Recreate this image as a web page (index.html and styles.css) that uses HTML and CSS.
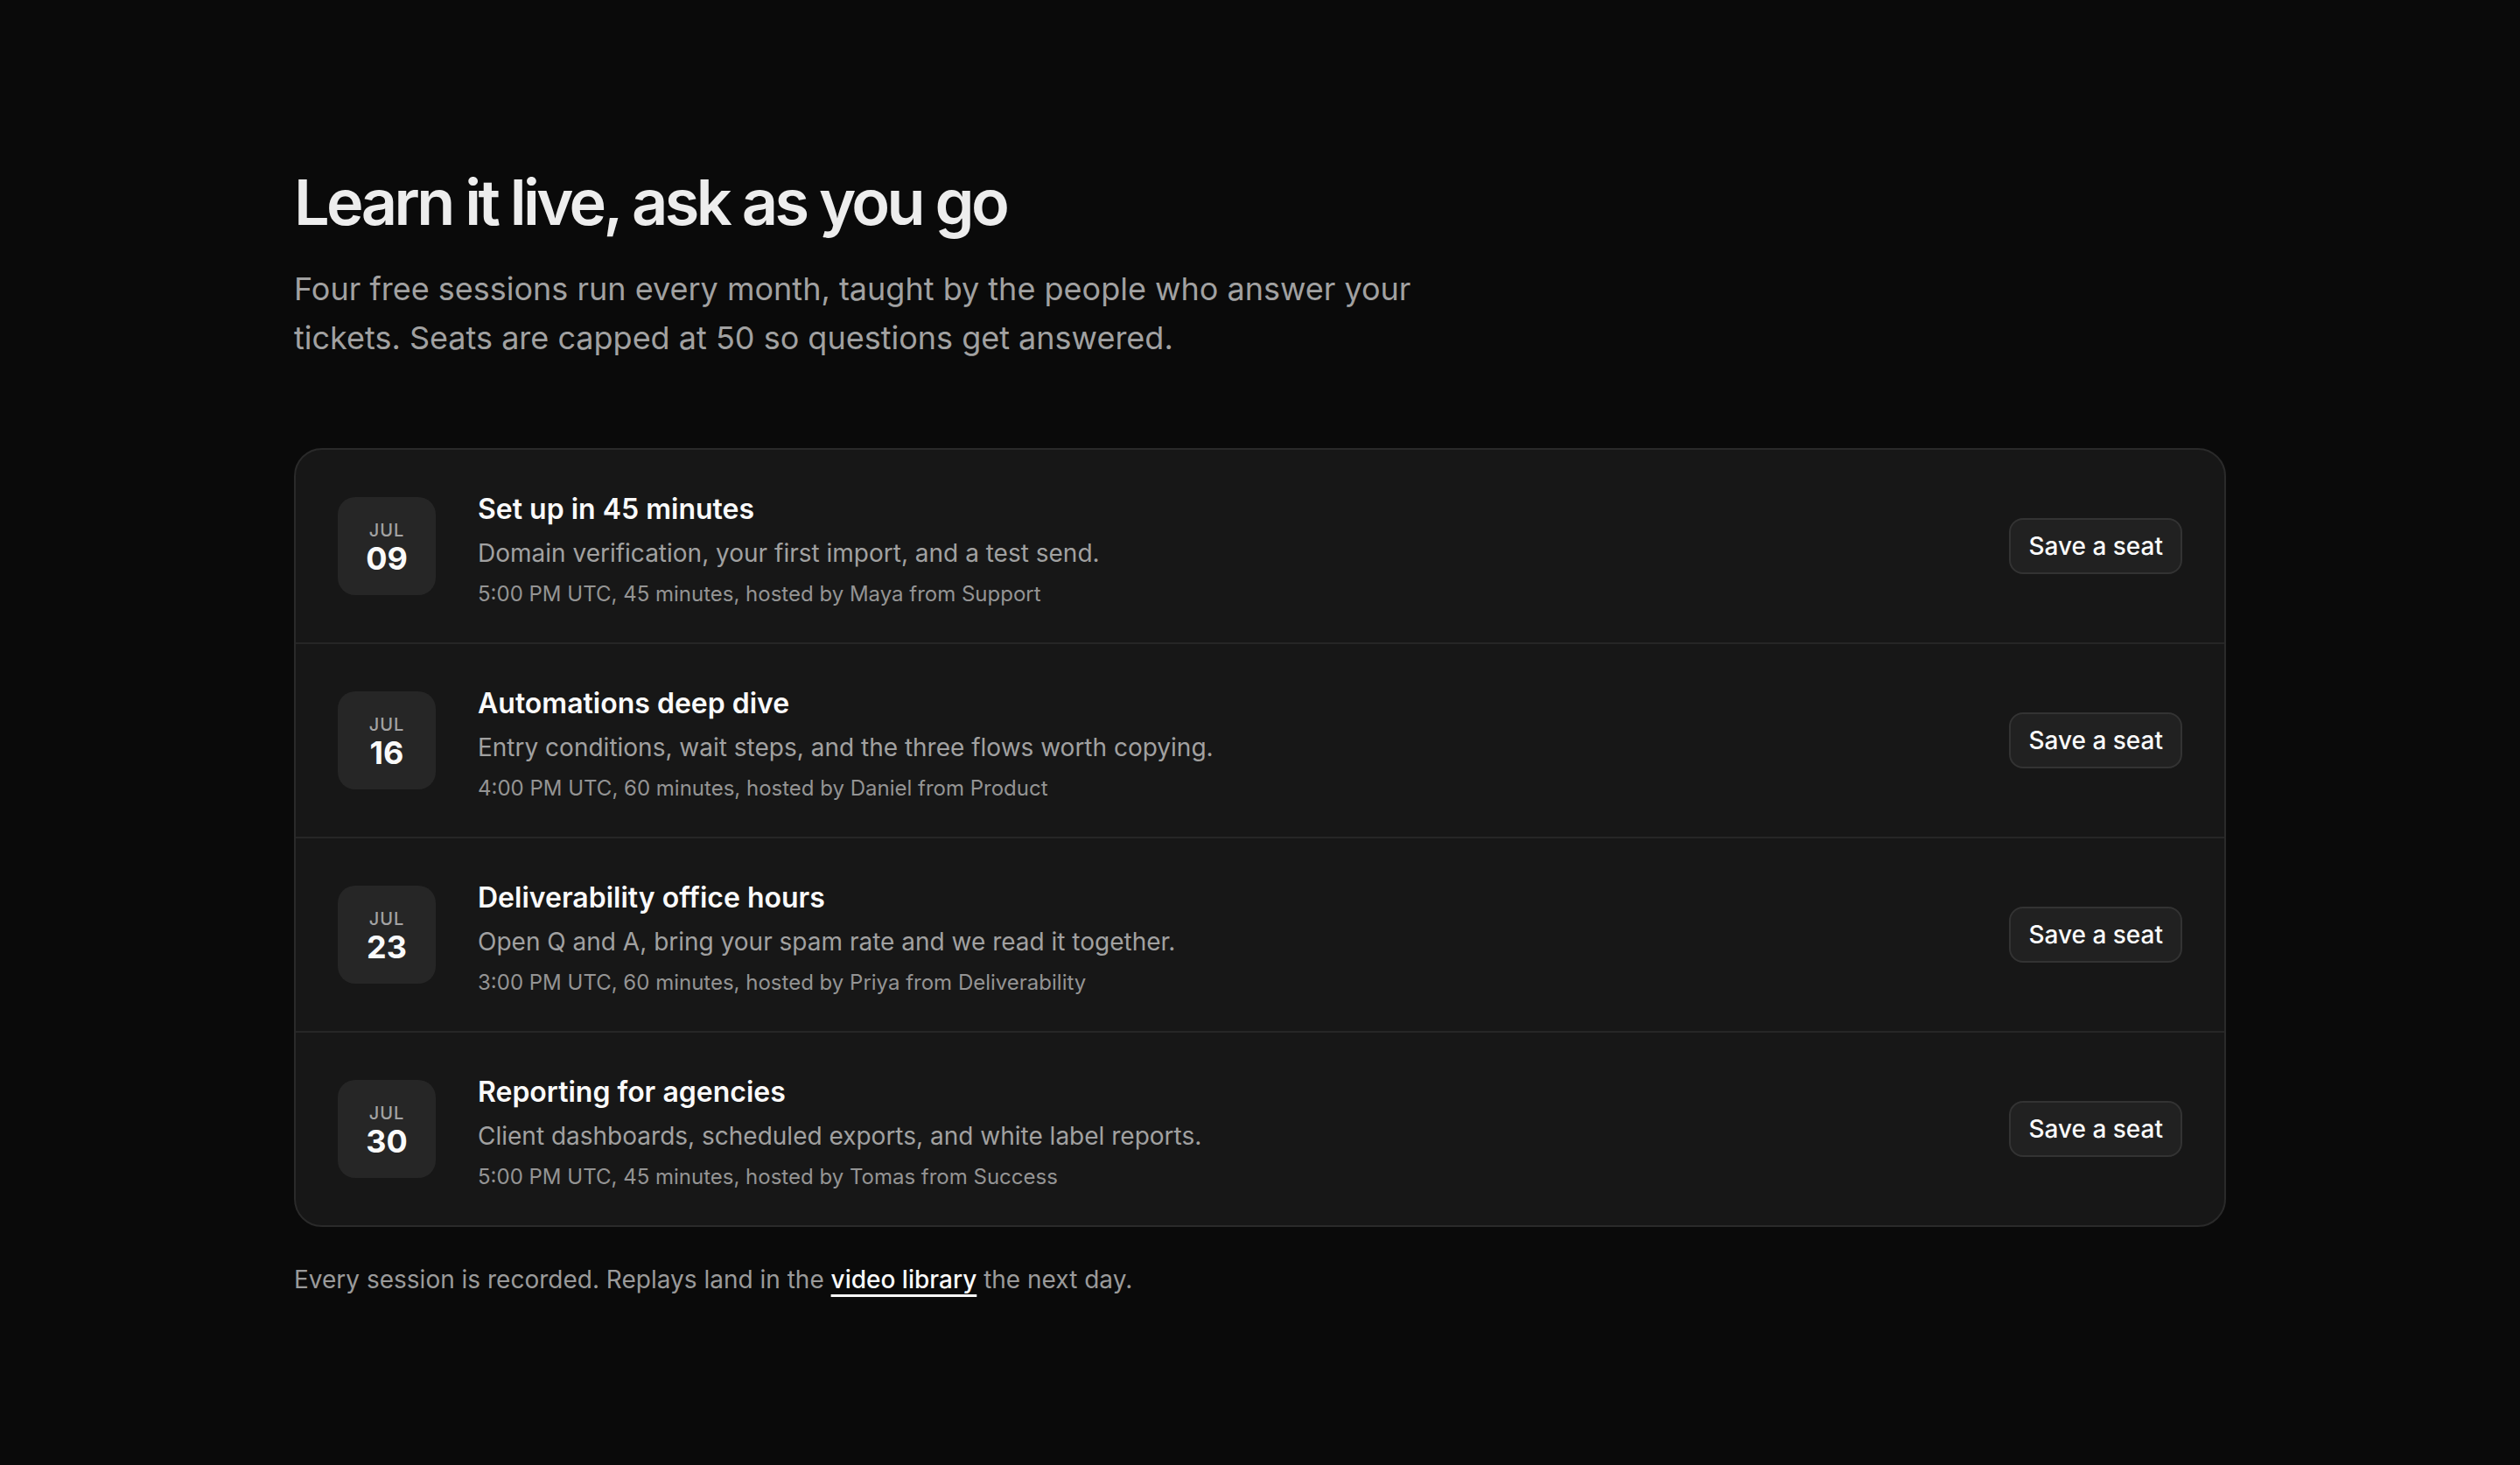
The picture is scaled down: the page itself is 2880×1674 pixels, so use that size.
FILE: index.html
```html
<!DOCTYPE html>
<html lang="en">
<head>
<meta charset="utf-8">
<title>Live sessions</title>
<link rel="stylesheet" href="styles.css">
</head>
<body>
<main class="page">
  <h1 class="title">Learn it live, ask as you go</h1>
  <p class="lead">Four free sessions run every month, taught by the people who answer your tickets. Seats are capped at 50 so questions get answered.</p>

  <ul class="sessions">
    <li class="session">
      <div class="date"><span class="month">JUL</span><span class="day">09</span></div>
      <div class="info">
        <h2 class="name">Set up in 45 minutes</h2>
        <p class="desc">Domain verification, your first import, and a test send.</p>
        <p class="meta">5:00 PM UTC, 45 minutes, hosted by Maya from Support</p>
      </div>
      <button class="seat">Save a seat</button>
    </li>
    <li class="session">
      <div class="date"><span class="month">JUL</span><span class="day">16</span></div>
      <div class="info">
        <h2 class="name">Automations deep dive</h2>
        <p class="desc">Entry conditions, wait steps, and the three flows worth copying.</p>
        <p class="meta">4:00 PM UTC, 60 minutes, hosted by Daniel from Product</p>
      </div>
      <button class="seat">Save a seat</button>
    </li>
    <li class="session">
      <div class="date"><span class="month">JUL</span><span class="day">23</span></div>
      <div class="info">
        <h2 class="name">Deliverability office hours</h2>
        <p class="desc">Open Q and A, bring your spam rate and we read it together.</p>
        <p class="meta">3:00 PM UTC, 60 minutes, hosted by Priya from Deliverability</p>
      </div>
      <button class="seat">Save a seat</button>
    </li>
    <li class="session">
      <div class="date"><span class="month">JUL</span><span class="day">30</span></div>
      <div class="info">
        <h2 class="name">Reporting for agencies</h2>
        <p class="desc">Client dashboards, scheduled exports, and white label reports.</p>
        <p class="meta">5:00 PM UTC, 45 minutes, hosted by Tomas from Success</p>
      </div>
      <button class="seat">Save a seat</button>
    </li>
  </ul>

  <p class="footnote">Every session is recorded. Replays land in the <a class="link" href="#">video library</a> the next day.</p>
</main>
</body>
</html>
```

FILE: styles.css
```css
* { box-sizing: border-box; }

html, body {
  margin: 0;
  padding: 0;
  background: #0a0a0a;
}

body {
  font-family: Inter, "Noto Sans", "Liberation Sans", sans-serif;
  color: #fafafa;
  -webkit-font-smoothing: antialiased;
}

.page {
  padding: 191px 336px 120px;
}

.title {
  margin: 0;
  font-size: 72px;
  line-height: 1.1;
  font-weight: 600;
  letter-spacing: -0.05em;
  color: #ededed;
}

.lead {
  margin: 32px 0 0;
  max-width: 1340px;
  font-size: 36px;
  line-height: 56px;
  color: #a1a1a1;
}

.sessions {
  list-style: none;
  margin: 98px 0 0;
  padding: 0;
  background: #171717;
  border: 2px solid #2a2a2a;
  border-radius: 32px;
  overflow: hidden;
}

.session {
  display: flex;
  align-items: center;
  gap: 48px;
  height: 220px;
  padding: 0 48px;
}

.session + .session {
  height: 222px;
  border-top: 2px solid #262626;
}

.date {
  flex: none;
  width: 112px;
  height: 112px;
  padding-top: 4px;
  border-radius: 20px;
  background: #262626;
  display: flex;
  flex-direction: column;
  align-items: center;
  justify-content: center;
}

.month {
  font-size: 20px;
  line-height: 24px;
  font-weight: 500;
  letter-spacing: 1px;
  color: #a3a3a3;
}

.day {
  font-size: 36px;
  line-height: 40px;
  font-weight: 700;
  color: #fafafa;
}

.info {
  flex: 1;
  min-width: 0;
  padding-top: 8px;
}

.name {
  margin: 0 0 6px;
  font-size: 32px;
  line-height: 44px;
  font-weight: 600;
  color: #fafafa;
}

.desc {
  margin: 0;
  font-size: 28px;
  line-height: 44px;
  color: #a1a1a1;
}

.meta {
  margin: 7px 0 0;
  font-size: 24px;
  line-height: 36px;
  color: #949494;
}

.seat {
  flex: none;
  height: 64px;
  padding: 0 20px;
  font-family: inherit;
  font-size: 28px;
  font-weight: 500;
  color: #fafafa;
  background: #212121;
  border: 2px solid #333333;
  border-radius: 16px;
  cursor: pointer;
}

.footnote {
  margin: 38px 0 0;
  font-size: 28px;
  line-height: 44px;
  color: #9a9a9a;
}

.link {
  color: #fafafa;
  font-weight: 500;
  text-decoration: underline;
  text-decoration-thickness: 3px;
  text-underline-offset: 7px;
}
```
